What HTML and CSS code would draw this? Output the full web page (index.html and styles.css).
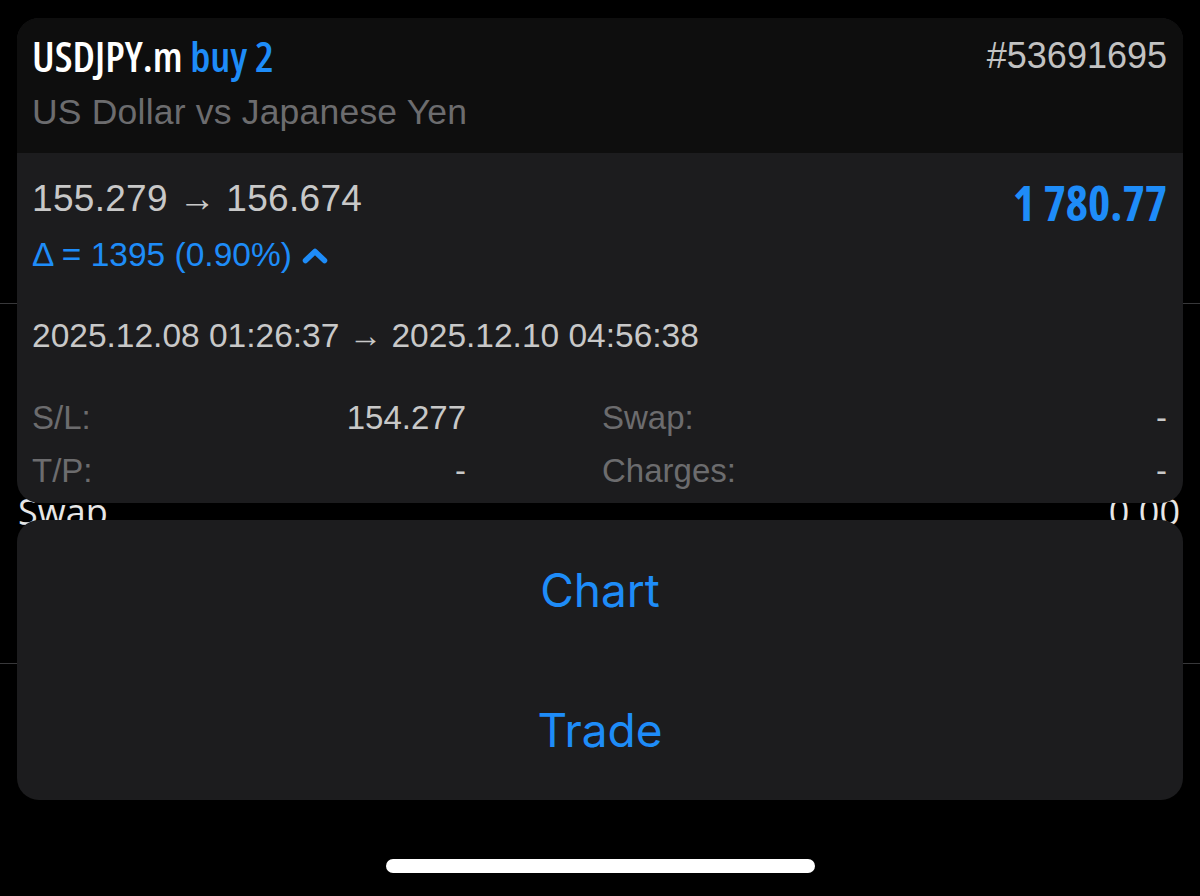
FILE: index.html
```html
<!DOCTYPE html>
<html lang="en">
<head>
<meta charset="utf-8">
<title>USDJPY.m position</title>
<link rel="stylesheet" href="styles.css">
</head>
<body>
<div class="screen">
  <div class="bg-list">
    <div class="bg-row bg-row-swap">
      <span class="bg-label">Swap</span>
      <span class="bg-value">0.00</span>
    </div>
    <div class="bg-row"></div>
  </div>

  <div class="sheet">
    <section class="card">
      <header class="card-head">
        <div class="title-row">
          <h1 class="title"><span class="symbol">USDJPY.m</span> <span class="side">buy 2</span></h1>
          <span class="ticket">#53691695</span>
        </div>
        <div class="subtitle">US Dollar vs Japanese Yen</div>
      </header>
      <div class="card-body">
        <div class="price-row">
          <span class="prices">155.279 → 156.674</span>
          <span class="profit">1 780.77</span>
        </div>
        <div class="delta">Δ = 1395 (0.90%)
          <svg class="chev" width="26" height="16" viewBox="0 0 26 16"><polyline points="3.5,12.5 13,3.5 22.5,12.5" fill="none" stroke="currentColor" stroke-width="5.5" stroke-linecap="round" stroke-linejoin="round"/></svg>
        </div>
        <div class="dates">2025.12.08 01:26:37 → 2025.12.10 04:56:38</div>
        <div class="details">
          <div class="pair"><span class="lbl">S/L:</span><span class="val">154.277</span></div>
          <div class="pair"><span class="lbl">Swap:</span><span class="val">-</span></div>
          <div class="pair"><span class="lbl">T/P:</span><span class="val">-</span></div>
          <div class="pair"><span class="lbl">Charges:</span><span class="val">-</span></div>
        </div>
      </div>
    </section>

    <section class="actions">
      <button class="action">Chart</button>
      <button class="action">Trade</button>
    </section>

    <div class="home-indicator"></div>
  </div>
</div>
</body>
</html>
```

FILE: styles.css
```css
* { box-sizing: border-box; }

html, body {
  margin: 0;
  padding: 0;
  background: #000;
}

body {
  width: 1200px;
  height: 896px;
  overflow: hidden;
  font-family: "Liberation Sans", Arial, sans-serif;
  color: #c8c8c8;
}

.screen {
  position: relative;
  width: 1200px;
  height: 896px;
  background: #000;
  overflow: hidden;
}

/* background page (partly hidden by the sheet) */
.bg-list {
  padding-top: 303px;
}

.bg-row {
  border-top: 1px solid #38383a;
}

.bg-row-swap {
  height: 360px;
  display: flex;
  justify-content: space-between;
  padding: 188px 20px 0 18px;
  font-family: "Open Sans", "Liberation Sans", sans-serif;
  font-size: 36px;
  line-height: 40px;
  color: #e6e6e6;
}

/* overlay sheet */
.sheet {
  position: absolute;
  inset: 0;
  display: flex;
  flex-direction: column;
  padding: 18px 17px 0;
  gap: 17px;
}

.card {
  height: 485px;
  border-radius: 22px;
  overflow: hidden;
  background: #1c1c1e;
  display: flex;
  flex-direction: column;
}

.card-head {
  height: 135px;
  background: #0e0e0e;
  padding: 13px 16px 0 15px;
}

.title-row {
  display: flex;
  justify-content: space-between;
  align-items: flex-start;
}

.title {
  margin: 0;
  font-family: "Open Sans", "DejaVu Sans Condensed", sans-serif;
  font-stretch: 75%;
  font-weight: 600;
  font-size: 42px;
  line-height: 50px;
  color: #fff;
}

.side { color: #1e8cf8; }

.ticket {
  font-size: 36px;
  line-height: 50px;
  color: #c2c2c2;
}

.subtitle {
  margin-top: 11px;
  font-size: 35.5px;
  line-height: 40px;
  letter-spacing: 0.2px;
  color: #6c6c6e;
}

.card-body {
  flex: 1;
  padding: 25px 16px 0 15px;
}

.price-row {
  display: flex;
  justify-content: space-between;
  align-items: flex-start;
}

.prices {
  font-size: 37px;
  line-height: 42px;
  letter-spacing: 0.3px;
  color: #c8c8c8;
}

.profit {
  margin-top: 4px;
  font-family: "Open Sans", "DejaVu Sans Condensed", sans-serif;
  font-stretch: 75%;
  font-weight: 700;
  font-size: 47.5px;
  line-height: 42px;
  color: #1e8cf8;
}

.delta {
  margin-top: 11px;
  display: flex;
  align-items: center;
  gap: 10px;
  font-size: 33.5px;
  line-height: 40px;
  color: #1e8cf8;
}

.chev { margin-top: 2px; }

.dates {
  margin-top: 41px;
  font-size: 33.5px;
  line-height: 40px;
  color: #c8c8c8;
}

.details {
  margin-top: 42px;
  display: grid;
  grid-template-columns: 434px 1fr;
  column-gap: 136px;
  row-gap: 13px;
  font-size: 33px;
  line-height: 40px;
}

.pair {
  display: flex;
  justify-content: space-between;
}

.lbl { color: #6c6c6e; }
.val { color: #c8c8c8; }

.actions {
  height: 280px;
  border-radius: 22px;
  background: #1c1c1e;
  display: flex;
  flex-direction: column;
}

.action {
  flex: 1;
  border: 0;
  background: transparent;
  font-family: Inter, "Liberation Sans", sans-serif;
  font-size: 46px;
  color: #1e8cf8;
  padding: 0;
}

.home-indicator {
  align-self: center;
  margin-top: 42px;
  width: 429px;
  height: 14px;
  border-radius: 7px;
  background: #fff;
}
```
